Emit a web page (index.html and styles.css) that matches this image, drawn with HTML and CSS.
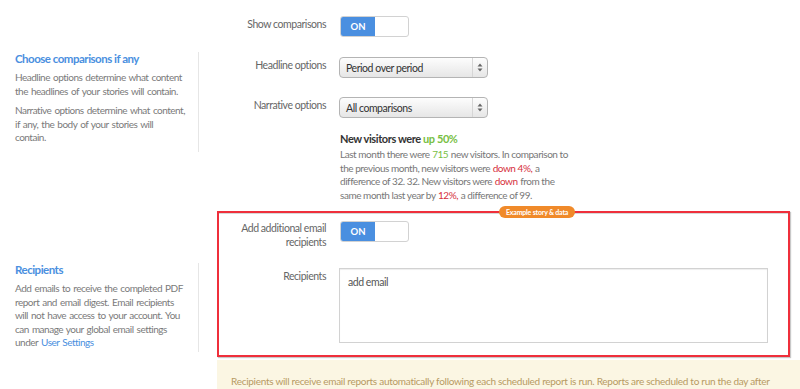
FILE: index.html
```html
<!DOCTYPE html>
<html>
<head>
<meta charset="utf-8">
<link rel="stylesheet" href="styles.css">
</head>
<body>
<div class="page">
  <section class="section sec-top">
    <div class="help"></div>
    <div class="fields">
      <div class="field">
        <label class="label">Show comparisons</label>
        <div class="control"><div class="toggle"><span class="toggle-on">ON</span><span class="toggle-off"></span></div></div>
      </div>
    </div>
  </section>

  <section class="section sec-one">
    <div class="help help-box">
      <h3 class="help-title">Choose comparisons if any</h3>
      <p>Headline options determine what content<br>the headlines of your stories will contain.</p>
      <p>Narrative options determine what content,<br>if any, the body of your stories will<br>contain.</p>
    </div>
    <div class="fields">
      <div class="field">
        <label class="label">Headline options</label>
        <div class="control"><div class="select"><span class="select-text">Period over period</span><span class="select-arrows"><svg width="6" height="9" viewBox="0 0 6 9"><path d="M3 0.5L5.5 3.5H0.5Z" fill="#666"/><path d="M3 8.5L5.5 5.5H0.5Z" fill="#666"/></svg></span></div></div>
      </div>
      <div class="field field-gap">
        <label class="label">Narrative options</label>
        <div class="control"><div class="select"><span class="select-text">All comparisons</span><span class="select-arrows"><svg width="6" height="9" viewBox="0 0 6 9"><path d="M3 0.5L5.5 3.5H0.5Z" fill="#666"/><path d="M3 8.5L5.5 5.5H0.5Z" fill="#666"/></svg></span></div></div>
      </div>
      <div class="field story-field">
        <div class="label"></div>
        <div class="control">
          <div class="story">
            <h4 class="story-title">New visitors were <span class="up">up 50%</span></h4>
            <p class="story-body">Last month there were <span class="up">715</span> new visitors. In comparison to the previous month, new visitors were <span class="down">down 4%,</span> a difference of 32. 32. New visitors were <span class="down">down</span> from the same month last year by <span class="down">12%,</span> a difference of 99.</p>
            <span class="badge">Example story &amp; data</span>
          </div>
        </div>
      </div>
    </div>
  </section>

  <section class="section sec-two">
    <div class="help help-box help-recipients">
      <h3 class="help-title">Recipients</h3>
      <p>Add emails to receive the completed PDF<br>report and email digest. Email recipients<br>will not have access to your account. You<br>can manage your global email settings<br>under <a class="link" href="#">User Settings</a></p>
    </div>
    <div class="fields highlight">
      <div class="field">
        <label class="label label-two">Add additional email recipients</label>
        <div class="control"><div class="toggle"><span class="toggle-on">ON</span><span class="toggle-off"></span></div></div>
      </div>
      <div class="field field-recip">
        <label class="label">Recipients</label>
        <div class="control"><div class="textarea">add email</div></div>
      </div>
    </div>
  </section>

  <section class="section sec-note">
    <div class="help"></div>
    <div class="note">Recipients will receive email reports automatically following each scheduled report is run. Reports are scheduled to run the day after the end of each reporting period.</div>
  </section>
</div>
</body>
</html>
```

FILE: styles.css
```css
* { box-sizing: border-box; }
html, body { margin: 0; padding: 0; background: #fff; overflow: hidden; }
body {
  font-family: Lato, "Open Sans", sans-serif;
  font-size: 10px;
  letter-spacing: -0.45px;
  color: #777;
  width: 800px;
  height: 389px;
}
.page { width: 800px; }
.section {
  display: grid;
  grid-template-columns: 199px 573px;
  column-gap: 18px;
  align-items: start;
}
.sec-top { padding-top: 16px; }
.sec-one { margin-top: 15px; }
.sec-two { margin-top: 9px; }
.sec-note { margin-top: 3px; }

.help { padding: 0 3px 0 15px; }
.help-box { border-right: 1px solid #e6e6e6; }
.sec-one .help-box { padding-top: 0; padding-bottom: 7px; }
.help-recipients { margin-top: 52px; padding-bottom: 2px; }
.help-title {
  margin: 0;
  font-size: 11.5px;
  line-height: 13px;
  font-weight: 700;
  letter-spacing: -0.5px;
  color: #4a8fe0;
}
.help p {
  margin: 6px 0 0;
  line-height: 13.5px;
  color: #7a7a7a;
  letter-spacing: -0.5px;
  word-spacing: 1px;
}
.link { color: #4a8fe0; text-decoration: none; }

.fields { padding: 0 0 0 2px; }
.sec-one .fields { padding-top: 5px; }
.field {
  display: grid;
  grid-template-columns: 107px 1fr;
  column-gap: 13px;
  align-items: start;
}
.field-gap { margin-top: 19px; }
.label {
  text-align: right;
  color: #666;
  font-size: 10.5px;
  line-height: 14px;
  padding-top: 1px;
}
.label-two { padding-top: 0; }

.toggle {
  display: flex;
  width: 69px;
  height: 21px;
  border: 1px solid #d2d2d2;
  border-radius: 3px;
  overflow: hidden;
  margin-left: 1px;
  background: #fff;
}
.toggle-on {
  width: 34px;
  background: #4a8fe0;
  color: #fff;
  font-weight: 700;
  font-size: 9.5px;
  letter-spacing: 0;
  display: flex;
  align-items: center;
  justify-content: center;
}
.toggle-off { flex: 1; }

.select {
  display: flex;
  align-items: center;
  width: 149px;
  height: 21px;
  border: 1px solid #b4b4b4;
  border-radius: 4px;
  background: linear-gradient(#fdfdfd, #e6e6e6);
  color: #333;
}
.select-text { flex: 1; padding-left: 6px; font-size: 10.5px; }
.select-arrows {
  width: 15px;
  height: 100%;
  border-left: 1px solid #d6d6d6;
  display: flex;
  align-items: center;
  justify-content: center;
}

.story-field { margin-top: 13px; }
.story { position: relative; width: 233px; padding-left: 1px; }
.story-title {
  margin: 0;
  font-size: 11px;
  line-height: 16px;
  color: #333;
  font-weight: 700;
  letter-spacing: -0.4px;
}
.story-body {
  margin: 1px 0 0;
  line-height: 13.5px;
  color: #777;
}
.up { color: #77c043; }
.down { color: #d6303c; }
.story-body .up, .story-body .down { margin: 0 0.5px; }
.badge {
  position: absolute;
  left: 160px;
  bottom: -16px;
  z-index: 2;
  background: #f08a2a;
  color: #fff;
  font-size: 7px;
  font-weight: 700;
  letter-spacing: -0.2px;
  line-height: 12px;
  padding: 0 7px;
  border-radius: 6px;
  white-space: nowrap;
}

.highlight {
  border: 2px solid #ef2f3b;
  box-shadow: inset 0 1px 0 #d8d8d8, 1px 1px 1px #c8c8c8;
  padding: 8px 0 12px 0;
}
.field-recip { margin-top: 19px; }
.textarea {
  width: 429px;
  height: 75px;
  border: 1px solid #d2d2d2;
  padding: 7px 8px;
  font-size: 10.5px;
  color: #555;
  box-shadow: inset 0 1px 1px #eee;
}

.note {
  margin-right: -20px;
  background: #fbf6e3;
  padding: 14px 29px 10px 14px;
  color: #b79a62;
  font-size: 10px;
  letter-spacing: -0.28px;
  line-height: 14px;
}
```
